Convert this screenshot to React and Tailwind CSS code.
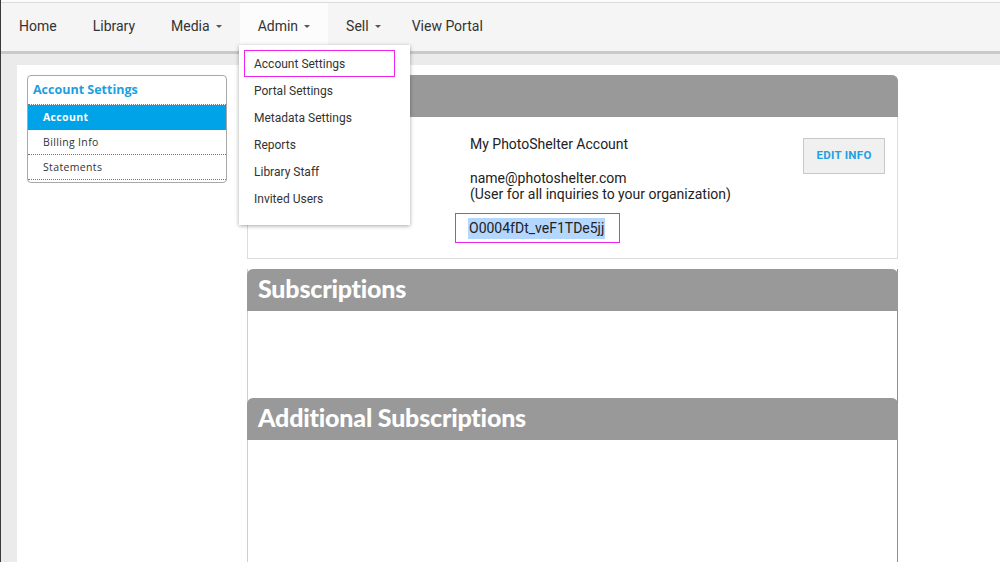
import React from "react";

const navItems = [
  { label: "Home" },
  { label: "Library" },
  { label: "Media", caret: true },
  { label: "Admin", caret: true, active: true },
  { label: "Sell", caret: true, tight: true },
  { label: "View Portal" },
];

const adminMenu = [
  "Account Settings",
  "Portal Settings",
  "Metadata Settings",
  "Reports",
  "Library Staff",
  "Invited Users",
];

const sideLinks = ["Account", "Billing Info", "Statements"];

const Caret = () => (
  <span className="ml-[6px] mt-[1px] inline-block h-0 w-0 border-x-[3px] border-t-[3.5px] border-x-transparent border-t-[#555]" />
);

const PanelHeader = ({ title }) => (
  <div className="flex h-[42px] items-center rounded-t-[6px] bg-[#999999] px-[11px] pb-[3px]">
    <h2 className="font-['Lato'] text-[25px] font-black leading-none tracking-[-0.2px] text-white">{title}</h2>
  </div>
);

export default function App() {
  return (
    <div className="relative h-[562px] w-[1000px] overflow-hidden border-l border-[#3a3a3a] bg-[#ebebeb] font-['Roboto',sans-serif]">
      {/* Top nav */}
      <div className="h-[3px] border-b border-[#dcdcdc] bg-[#fafafa]" />
      <nav className="flex h-[51px] border-b-[3px] border-[#c9c9c9] bg-[#f5f5f5] text-[14px] text-[#333]">
        {navItems.map((item) => (
          <div
            key={item.label}
            className={`flex items-center pb-[2px] pl-[18px] ${item.tight ? "pr-[13px]" : "pr-[18px]"} ${
              item.active ? "bg-[#fcfcfc]" : ""
            }`}
          >
            {item.label}
            {item.caret && <Caret />}
          </div>
        ))}
      </nav>

      {/* Admin dropdown */}
      <div className="absolute left-[238px] top-[45px] z-10 h-[180px] w-[171px] bg-white py-[5px] shadow-[0_1px_4px_rgba(0,0,0,0.35)]">
        {adminMenu.map((label, i) => (
          <div
            key={label}
            className={`ml-[5px] flex h-[27px] w-[151px] items-center border pl-[9px] text-[12px] text-[#333] ${
              i === 0 ? "border-[#ee22ee]" : "border-transparent"
            }`}
          >
            {label}
          </div>
        ))}
      </div>

      {/* Page body */}
      <div className="ml-[16px] mt-[11px] flex h-full gap-[20px] bg-white pl-[10px] pt-[10px]">
        {/* Sidebar */}
        <aside className="h-[108px] w-[200px] shrink-0 overflow-hidden rounded-[4px] border border-[#a8a8a8] font-['Open_Sans',sans-serif]">
          <div className="flex h-[29px] items-center border-b border-dotted border-[#777] px-[5px] pt-[1px] text-[12.5px] font-bold text-[#1b9fe2]">
            Account Settings
          </div>
          {sideLinks.map((link, i) => (
            <div
              key={link}
              className={`flex h-[25px] items-center border-b border-dotted border-[#777] pl-[15px] pt-[1px] text-[10.5px] tracking-[0.35px] ${
                i === 0 ? "bg-[#00a3e8] font-bold text-white" : "text-[#333]"
              }`}
            >
              {link}
            </div>
          ))}
        </aside>

        {/* Main column */}
        <main className="flex w-[651px] flex-col">
          <section className="rounded-t-[6px] border-x border-b border-[#dcdcdc]">
            <div className="-mx-px h-[42px] rounded-t-[6px] bg-[#999999]" />
            <div className="flex h-[141px] justify-between pl-[222px] pr-[12px] pt-[20px] text-[14px] text-[#222]">
              <div>
                <p className="leading-[16px] mt-[-1px]">My PhotoShelter Account</p>
                <p className="mt-[18px] leading-[16px]">name@photoshelter.com</p>
                <p className="leading-[16px]">(User for all inquiries to your organization)</p>
                <div className="ml-[-15px] mt-[11px] flex h-[30px] w-[165px] items-center border border-[#ee22ee] pl-[12px]">
                  <span className="bg-[#b3d7fe] px-[1px] leading-[21px]">O0004fDt_veF1TDe5jj</span>
                </div>
              </div>
              <button className="mt-[1px] h-[36px] w-[82px] border border-[#c8c8c8] bg-[#f0f0f0] text-[11.5px] font-bold tracking-[0.3px] text-[#22a0e2]">
                EDIT INFO
              </button>
            </div>
          </section>

          <section className="mt-[10px] border-l border-r border-l-[#cfcfcf] border-r-[#8f8f8f]">
            <div className="-mx-px">
              <PanelHeader title="Subscriptions" />
            </div>
            <div className="h-[87px]" />
          </section>
          <section className="h-[200px] border-l border-r border-l-[#cfcfcf] border-r-[#8f8f8f]">
            <div className="-mx-px">
              <PanelHeader title="Additional Subscriptions" />
            </div>
          </section>
        </main>
      </div>
    </div>
  );
}
